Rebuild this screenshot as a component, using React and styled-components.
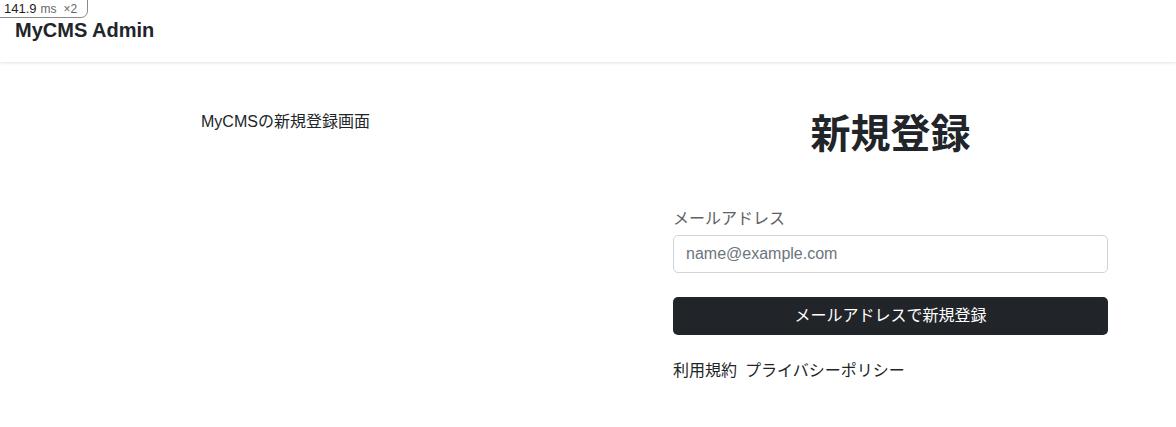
import React from 'react'
import styled, { createGlobalStyle } from 'styled-components'

const GlobalStyle = createGlobalStyle`
  body {
    margin: 0;
    background: #ffffff;
    color: #212529;
    font-family: "Liberation Sans", "Noto Sans CJK JP", sans-serif;
    font-size: 16px;
    line-height: 1.5;
  }
  * { box-sizing: border-box; }
`

const TimingBadge = styled.div`
  position: absolute;
  top: -1px;
  left: -1px;
  width: 89px;
  padding: 0 0 0 4px;
  height: 19px;
  line-height: 17px;
  font-size: 13px;
  color: #222;
  background: #fff;
  border: 1px solid #8a8a8a;
  border-radius: 0 0 7px 0;
  z-index: 10;
`

const BadgeUnit = styled.span`
  color: #666;
  font-size: 12px;
  margin-left: ${p => p.gap}px;
`

const Header = styled.header`
  height: 62px;
  display: flex;
  align-items: center;
  padding: 0 15px;
  background: #fff;
  box-shadow: 0 1px 3px rgba(0, 0, 0, 0.12);
`

const Brand = styled.div`
  font-size: 20px;
  font-weight: 700;
  color: #212529;
  margin-top: -2px;
`

const Main = styled.main`
  display: flex;
  padding: 48px 0 0 201px;
`

const LeftCol = styled.div`
  width: 472px;
`

const RightCol = styled.div`
  width: 435px;
  display: flex;
  flex-direction: column;
`

const Title = styled.h1`
  margin: 0 0 49px;
  font-size: 40px;
  line-height: 48px;
  font-weight: 700;
  text-align: center;
`

const Label = styled.label`
  color: #5c6166;
  margin-bottom: 4px;
`

const Input = styled.input`
  height: 38px;
  padding: 6px 12px;
  font: inherit;
  border: 1px solid #ced4da;
  border-radius: 5px;
  color: #212529;
  &::placeholder { color: #6c757d; }
`

const SubmitButton = styled.button`
  margin-top: 24px;
  height: 38px;
  font: inherit;
  color: #fff;
  background: #212529;
  border: none;
  border-radius: 5px;
`

const Links = styled.div`
  margin-top: 24px;
  display: flex;
  gap: 8px;
`

const LinkText = styled.a`
  color: #212529;
  text-decoration: none;
`

export default function App() {
  return (
    <>
      <GlobalStyle />
      <TimingBadge>
        141.9<BadgeUnit gap={4}>ms</BadgeUnit><BadgeUnit gap={7}>×2</BadgeUnit>
      </TimingBadge>
      <Header>
        <Brand>MyCMS Admin</Brand>
      </Header>
      <Main>
        <LeftCol>MyCMSの新規登録画面</LeftCol>
        <RightCol>
          <Title>新規登録</Title>
          <Label>メールアドレス</Label>
          <Input placeholder="name@example.com" />
          <SubmitButton>メールアドレスで新規登録</SubmitButton>
          <Links>
            <LinkText>利用規約</LinkText>
            <LinkText>プライバシーポリシー</LinkText>
          </Links>
        </RightCol>
      </Main>
    </>
  )
}
